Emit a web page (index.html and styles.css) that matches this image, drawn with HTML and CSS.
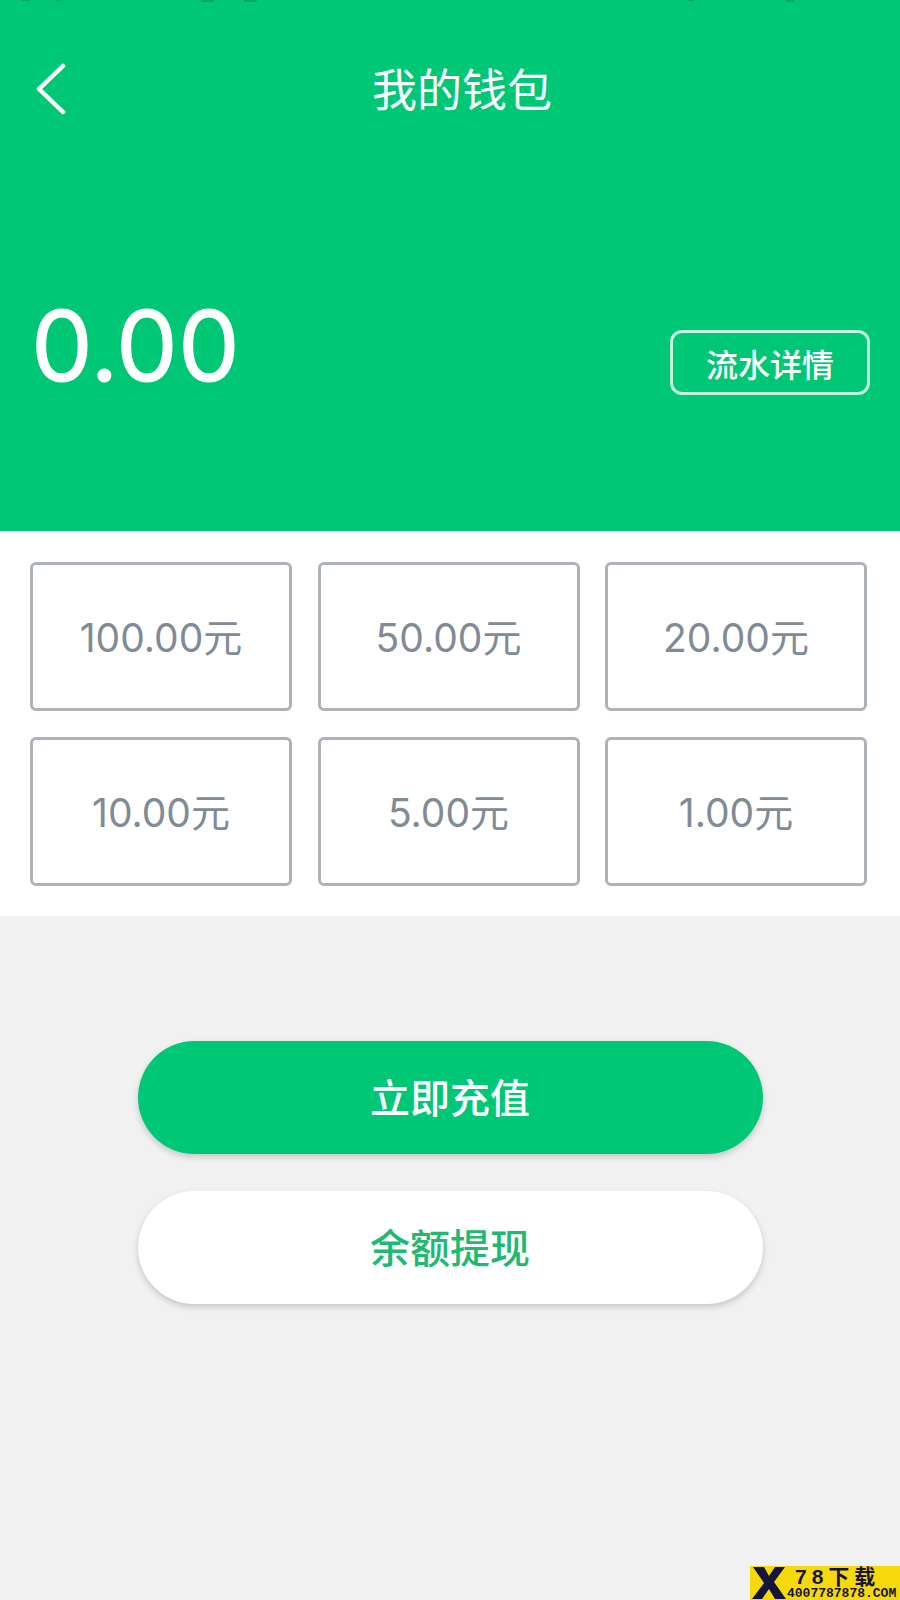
FILE: index.html
```html
<!DOCTYPE html>
<html lang="zh-CN">
<head>
  <meta charset="UTF-8" />
  <title>我的钱包</title>
  <link rel="stylesheet" href="styles.css">
</head>
<body>
  <div class="page">
    <header class="top">
      <div class="status-cut"></div>
      <div class="nav">
        <svg class="back" width="32" height="52" viewBox="0 0 32 52"><path d="M29 3 L5 26 L29 49" fill="none" stroke="#fff" stroke-width="4.5" stroke-linecap="round" stroke-linejoin="round"/></svg>
        <h1 class="title">我的钱包</h1>
      </div>
      <div class="balance">
        <span class="amount">0.00</span>
        <a class="detail">流水详情</a>
      </div>
    </header>

    <section class="amounts">
      <div class="amount-card">100.00元</div>
      <div class="amount-card">50.00元</div>
      <div class="amount-card">20.00元</div>
      <div class="amount-card">10.00元</div>
      <div class="amount-card">5.00元</div>
      <div class="amount-card">1.00元</div>
    </section>

    <section class="actions">
      <button class="btn btn-green">立即充值</button>
      <button class="btn btn-white">余额提现</button>
    </section>

    <div class="watermark">
      <svg class="wm-x" width="37" height="34" viewBox="0 0 37 34"><path d="M3 1 H14 L19 10 L25 1 H35 L24 16 L36 33 H25 L19 23 L12 33 H2 L14 17 Z" fill="#14143c"/></svg>
      <div class="wm-text">
        <span class="wm-name">78下载</span>
        <span class="wm-tel">4007787878.COM</span>
      </div>
    </div>
  </div>
</body>
</html>
```

FILE: styles.css
```css
* {
  box-sizing: border-box;
}

body {
  margin: 0;
  font-family: Inter, "Noto Sans CJK SC", sans-serif;
  background-color: #f1f1f1;
}

.page {
  position: relative;
  width: 900px;
  height: 1600px;
  overflow: hidden;
  background-color: #f1f1f1;
}

.top {
  position: relative;
  height: 531px;
  background-color: #00c775;
  color: #fff;
  padding: 0 30px 0 34px;
}

/* what is left of the cropped status bar */
.status-cut {
  position: absolute;
  top: 0;
  left: 0;
  width: 100%;
  height: 2px;
  opacity: 0.35;
  background:
    linear-gradient(#0b6b45, #0b6b45) 22px 0 / 8px 1px no-repeat,
    linear-gradient(#0b6b45, #0b6b45) 55px 0 / 6px 1px no-repeat,
    linear-gradient(#0b6b45, #0b6b45) 201px 0 / 13px 2px no-repeat,
    linear-gradient(#0b6b45, #0b6b45) 244px 0 / 13px 2px no-repeat,
    linear-gradient(#0b6b45, #0b6b45) 688px 0 / 6px 1px no-repeat,
    linear-gradient(#0b6b45, #0b6b45) 786px 0 / 8px 2px no-repeat;
}

.nav {
  position: relative;
  height: 174px;
  display: flex;
  align-items: center;
  justify-content: center;
  padding-left: 20px;
}

.back {
  position: absolute;
  left: 0;
  top: 63px;
}

.title {
  margin: 0;
  font-size: 45px;
  font-weight: 400;
}

.balance {
  display: flex;
  justify-content: space-between;
  align-items: flex-start;
  margin-top: 110px;
}

.amount {
  font-size: 98px;
  font-weight: 400;
  -webkit-text-stroke: 1px #fff;
  line-height: 124px;
  margin-left: -3px;
}

.detail {
  width: 200px;
  height: 65px;
  margin-top: 46px;
  border: 3px solid #c4f7e2;
  border-radius: 12px;
  display: flex;
  align-items: center;
  justify-content: center;
  font-size: 32px;
  font-weight: 500;
}

.amounts {
  height: 385px;
  background-color: #fff;
  padding: 31px 33px 30px 30px;
  display: grid;
  grid-template-columns: repeat(3, 262px);
  grid-template-rows: repeat(2, 149px);
  gap: 26px 25.5px;
}

.amount-card {
  border: 3px solid #adb3b8;
  border-radius: 6px;
  display: flex;
  align-items: center;
  justify-content: center;
  padding-bottom: 4px;
  color: #7f8b95;
  font-size: 39px;
}

.actions {
  display: flex;
  flex-direction: column;
  align-items: center;
  gap: 37px;
  padding-top: 125px;
}

.btn {
  width: 625px;
  height: 113px;
  border: none;
  border-radius: 57px;
  padding-bottom: 4px;
  font-family: inherit;
  font-size: 40px;
  font-weight: 500;
  box-shadow: 0 3px 6px rgba(0,0,0,0.18);
}

.btn-green {
  background-color: #00c775;
  color: #fff;
}

.btn-white {
  background-color: #fff;
  color: #1fb971;
}

.watermark {
  position: absolute;
  right: 0;
  bottom: 0;
  width: 150px;
  height: 34px;
  background-color: #f5d90a;
  display: flex;
}

.wm-text {
  display: flex;
  flex-direction: column;
  color: #14143c;
}

.wm-name {
  font-family: "Liberation Sans", "Noto Sans CJK SC", sans-serif;
  font-size: 21px;
  font-weight: 700;
  height: 22px;
  line-height: 22px;
  padding-left: 8px;
  letter-spacing: 5px;
}

.wm-tel {
  font-family: "Liberation Mono", monospace;
  font-size: 13px;
  font-weight: 700;
  line-height: 12px;
  white-space: nowrap;
}
```
